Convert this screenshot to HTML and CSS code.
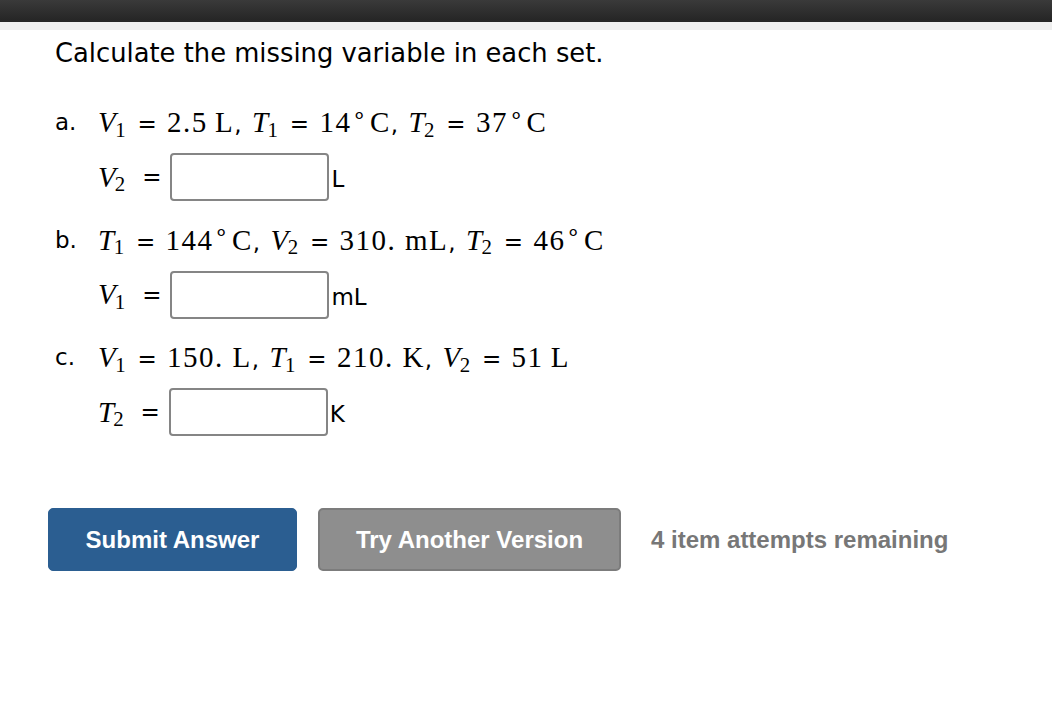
FILE: index.html
```html
<!DOCTYPE html>
<html>
<head>
<meta charset="utf-8">
<link rel="stylesheet" href="styles.css">
</head>
<body>
<div class="topbar"></div>
<div class="subbar"></div>
<main class="content">
  <p class="title">Calculate the missing variable in each set.</p>

  <div class="problem">
    <div class="label">a.</div>
    <div class="body">
      <div class="statement"><span class="m"><i>V</i><sub>1</sub></span> = <span class="m">2.5&thinsp;L</span>, <span class="m"><i>T</i><sub>1</sub></span> = <span class="m">14<sup>∘</sup>C</span>, <span class="m"><i>T</i><sub>2</sub></span> = <span class="m">37<sup>∘</sup>C</span></div>
      <div class="answer"><span class="m"><i>V</i><sub>2</sub></span><span class="eq">=</span><input class="box" type="text"><span class="unit">L</span></div>
    </div>
  </div>

  <div class="problem">
    <div class="label">b.</div>
    <div class="body">
      <div class="statement"><span class="m"><i>T</i><sub>1</sub></span> = <span class="m">144<sup>∘</sup>C</span>, <span class="m"><i>V</i><sub>2</sub></span> = <span class="m">310.&nbsp;mL</span>, <span class="m"><i>T</i><sub>2</sub></span> = <span class="m">46<sup>∘</sup>C</span></div>
      <div class="answer"><span class="m"><i>V</i><sub>1</sub></span><span class="eq">=</span><input class="box" type="text"><span class="unit">mL</span></div>
    </div>
  </div>

  <div class="problem">
    <div class="label">c.</div>
    <div class="body">
      <div class="statement"><span class="m"><i>V</i><sub>1</sub></span> = <span class="m">150.&nbsp;L</span>, <span class="m"><i>T</i><sub>1</sub></span> = <span class="m">210.&nbsp;K</span>, <span class="m"><i>V</i><sub>2</sub></span> = <span class="m">51&thinsp;L</span></div>
      <div class="answer"><span class="m"><i>T</i><sub>2</sub></span><span class="eq">=</span><input class="box" type="text"><span class="unit">K</span></div>
    </div>
  </div>

  <div class="actions">
    <button class="btn btn-primary" type="button">Submit Answer</button>
    <button class="btn btn-secondary" type="button">Try Another Version</button>
    <span class="attempts">4 item attempts remaining</span>
  </div>
</main>
</body>
</html>
```

FILE: styles.css
```css
html, body {
  margin: 0;
  padding: 0;
  background: #ffffff;
}
body {
  font-family: "DejaVu Sans", Verdana, sans-serif;
  color: #000;
}
.topbar {
  height: 22px;
  background: linear-gradient(#3a3a3a, #242424);
}
.subbar {
  height: 8px;
  background: #eeeeee;
}
.content {
  padding-left: 48px;
}
.title {
  margin: 0;
  padding: 7px 0 0 7px;
  font-size: 25.8px;
  line-height: 32px;
}
.problem {
  display: flex;
  margin-top: 36px;
}
.problem + .problem {
  margin-top: 21.5px;
}
.label {
  width: 50px;
  padding-left: 7px;
  box-sizing: border-box;
  font-size: 23px;
  line-height: 34px;
  height: 34px;
}
.statement {
  font-size: 23px;
  line-height: 34px;
  height: 34px;
  white-space: nowrap;
  word-spacing: 3px;
}
.m {
  font-family: "Liberation Serif", "Times New Roman", serif;
  font-size: 29px;
  word-spacing: 0;
  letter-spacing: 1.5px;
}
.m i {
  font-style: italic;
}
.m sub {
  font-size: 0.72em;
  line-height: 0;
  vertical-align: -0.22em;
  margin-left: -2px;
}
.m sup {
  font-size: 0.78em;
  line-height: 0;
  vertical-align: 0.42em;
  margin: 0 2px 0 1px;
}
.answer {
  display: flex;
  align-items: center;
  margin-top: 14px;
  height: 48px;
}
.answer .m {
  letter-spacing: 1px;
}
.eq {
  font-size: 23px;
  margin: 0 9px 0 16px;
}
.box {
  width: 159px;
  height: 48px;
  box-sizing: border-box;
  border: 2px solid #858585;
  border-radius: 4px;
  padding: 0;
  margin: 0;
  background: #fff;
}
.unit {
  font-size: 23px;
  margin-left: 2px;
  margin-top: 4px;
}
.actions {
  display: flex;
  align-items: center;
  margin-top: 72px;
}
.btn {
  height: 63px;
  border-radius: 5px;
  font-family: "Liberation Sans", Arial, sans-serif;
  font-weight: bold;
  font-size: 24px;
  color: #ffffff;
  padding: 0;
  margin: 0;
  box-sizing: border-box;
}
.btn-primary {
  width: 249px;
  background: #2b5e91;
  border: 1px solid #2b5e91;
}
.btn-secondary {
  width: 303px;
  margin-left: 21px;
  background: #8e8e8e;
  border: 2px solid #7c7c7c;
}
.attempts {
  margin-left: 30px;
  font-family: "Liberation Sans", Arial, sans-serif;
  font-weight: bold;
  font-size: 24px;
  color: #777777;
}
```
